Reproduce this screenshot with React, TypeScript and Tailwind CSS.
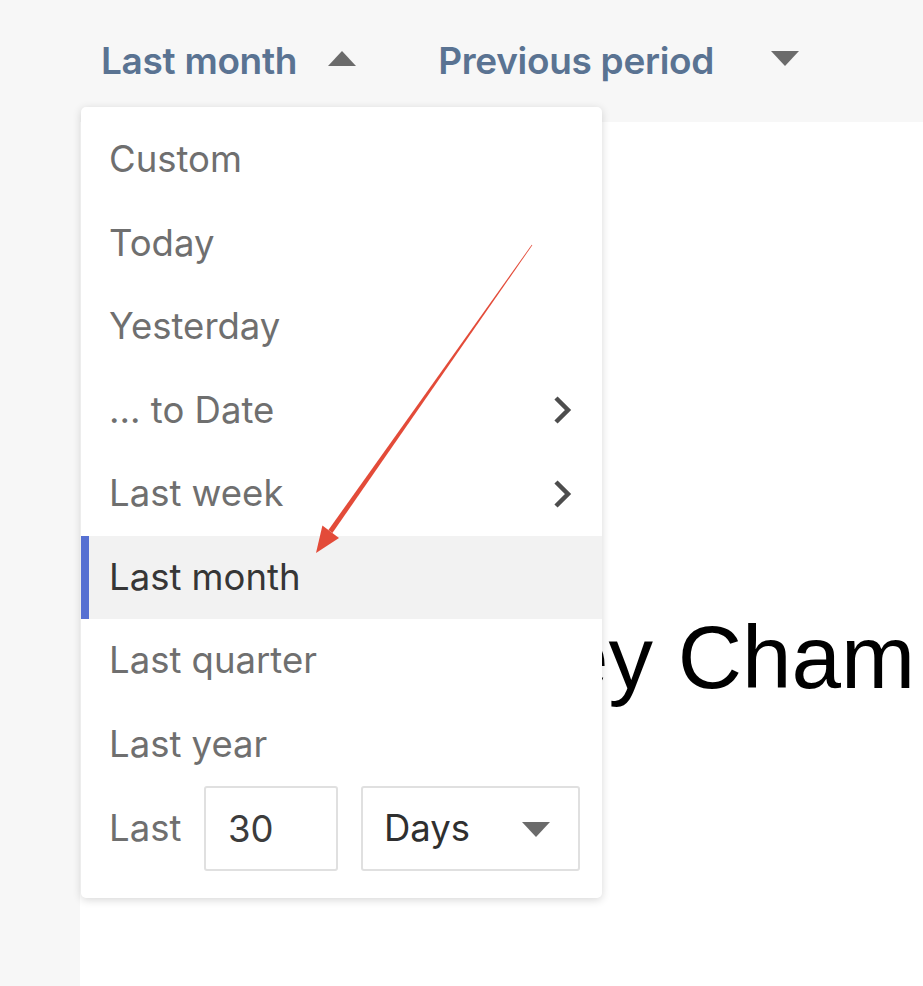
import { useState } from 'react'

const items = [
  { label: 'Custom' },
  { label: 'Today' },
  { label: 'Yesterday' },
  { label: '... to Date', sub: true },
  { label: 'Last week', sub: true },
  { label: 'Last month' },
  { label: 'Last quarter' },
  { label: 'Last year' },
]

function Chevron() {
  return (
    <svg width="20" height="30" viewBox="0 0 20 30" className="shrink-0">
      <polyline points="4,3 16,15 4,27" fill="none" stroke="#4d4d4d" strokeWidth="4.5" strokeLinejoin="miter" />
    </svg>
  )
}

function Caret({ up = false, className = '' }: { up?: boolean; className?: string }) {
  return (
    <svg width="28" height="15" viewBox="0 0 28 15" className={className}>
      {up ? <polygon points="14,0 28,15 0,15" fill="#6b6b6b" /> : <polygon points="0,0 28,0 14,15" fill="#6b6b6b" />}
    </svg>
  )
}

export default function App() {
  const [selected, setSelected] = useState('Last month')
  const [amount, setAmount] = useState('30')

  return (
    <div className="relative w-[923px] h-[986px] overflow-hidden bg-[#f7f7f7] font-['Inter',sans-serif]">
      {/* header */}
      <div className="h-[122px] flex items-center pl-[101px] text-[37px] font-semibold text-[#5a7392] tracking-[-0.3px]">
        <span>Last month</span>
        <Caret up className="ml-[31px] mt-[-6px]" />
        <span className="ml-[82px]">Previous period</span>
        <Caret className="ml-[57px] mt-[-6px]" />
      </div>

      <div className="flex h-[864px]">
        <div className="w-[80px] shrink-0" />
        <div className="flex-1 bg-white overflow-hidden pt-[485px] pl-[296px]">
          <div className="whitespace-nowrap font-['Liberation_Sans',Arial,sans-serif] text-[89px] leading-[100px] text-black">
            Survey Cham
          </div>
        </div>
      </div>

      {/* date range menu */}
      <div className="absolute left-[81px] top-[107px] w-[521px] bg-white rounded-[5px] shadow-[0_2px_9px_rgba(0,0,0,0.16)] pt-[11px] pb-[27px] text-[36.5px]">
        {items.map((it) => {
          const active = it.label === selected
          return (
            <div
              key={it.label}
              onClick={() => setSelected(it.label)}
              className={`relative h-[83.5px] flex items-center justify-between pl-[28px] pr-[30px] ${active ? 'bg-[#f2f2f2] text-[#363636]' : 'text-[#6f6f6f]'}`}
            >
              {active && <div className="absolute left-0 top-0 bottom-0 w-[8px] bg-[#5670d2]" />}
              <span>{it.label}</span>
              {it.sub && <Chevron />}
            </div>
          )
        })}
        <div className="flex items-center pl-[28px] pr-[22px] h-[85px]">
          <span className="text-[#6f6f6f] w-[95px]">Last</span>
          <input
            value={amount}
            onChange={(e) => setAmount(e.target.value)}
            className="w-[134px] h-[85px] border-2 border-[#e0e0e0] rounded-[3px] pl-[22px] text-[#3c3c3c] outline-none"
          />
          <div className="ml-[23px] flex-1 h-[85px] border-2 border-[#e0e0e0] rounded-[3px] flex items-center justify-between pl-[21px] pr-[28px] text-[#2f2f2f]">
            <span>Days</span>
            <Caret className="mt-[2px]" />
          </div>
        </div>
      </div>

      {/* annotation arrow */}
      <svg className="absolute left-0 top-0 pointer-events-none" width="923" height="986" viewBox="0 0 923 986">
        <polygon points="532.3,245.2 531.7,244.8 328.4,530.0 332.4,533.0" fill="#e34b39" />
        <polygon points="316,553 322.4,525.6 339,538" fill="#e34b39" />
      </svg>
    </div>
  )
}
